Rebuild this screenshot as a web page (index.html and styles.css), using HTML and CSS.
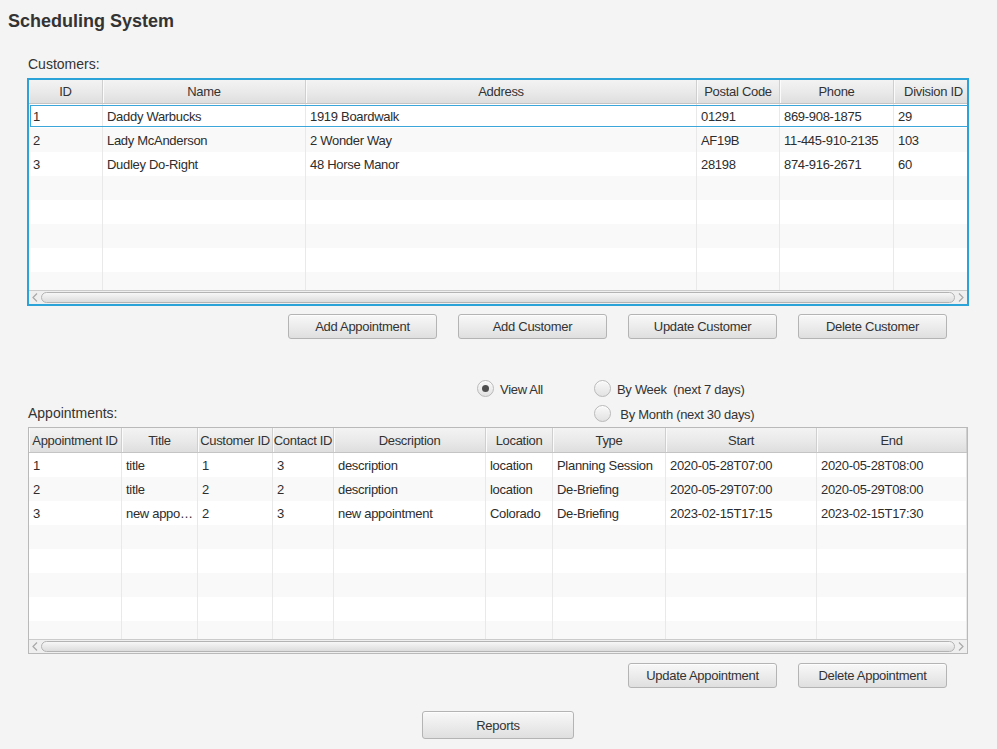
FILE: index.html
```html
<!DOCTYPE html>
<html>
<head>
<meta charset="utf-8">
<title>Scheduling System</title>
<link rel="stylesheet" href="styles.css">
</head>
<body>
<h1 class="title">Scheduling System</h1>
<div class="panel">
  <div class="section-label cust-label">Customers:</div>
  <div class="table cust-table focused">
    <div class="thead cust-cols">
      <div class="th">ID</div><div class="th">Name</div><div class="th">Address</div><div class="th">Postal Code</div><div class="th">Phone</div><div class="th">Division ID</div>
    </div>
    <div class="tbody">
      <div class="tr cust-cols focus-row"><div class="td">1</div><div class="td">Daddy Warbucks</div><div class="td">1919 Boardwalk</div><div class="td">01291</div><div class="td">869-908-1875</div><div class="td">29</div></div>
      <div class="tr cust-cols"><div class="td">2</div><div class="td">Lady McAnderson</div><div class="td">2 Wonder Way</div><div class="td">AF19B</div><div class="td">11-445-910-2135</div><div class="td">103</div></div>
      <div class="tr cust-cols"><div class="td">3</div><div class="td">Dudley Do-Right</div><div class="td">48 Horse Manor</div><div class="td">28198</div><div class="td">874-916-2671</div><div class="td">60</div></div>
      <div class="tr cust-cols"><div class="td"></div><div class="td"></div><div class="td"></div><div class="td"></div><div class="td"></div><div class="td"></div></div>
      <div class="tr cust-cols"><div class="td"></div><div class="td"></div><div class="td"></div><div class="td"></div><div class="td"></div><div class="td"></div></div>
      <div class="tr cust-cols"><div class="td"></div><div class="td"></div><div class="td"></div><div class="td"></div><div class="td"></div><div class="td"></div></div>
      <div class="tr cust-cols"><div class="td"></div><div class="td"></div><div class="td"></div><div class="td"></div><div class="td"></div><div class="td"></div></div>
      <div class="tr cust-cols"><div class="td"></div><div class="td"></div><div class="td"></div><div class="td"></div><div class="td"></div><div class="td"></div></div>
    </div>
    <div class="hscroll">
      <span class="arrow"><svg width="6" height="9" viewBox="0 0 6 9"><polyline points="5,0.5 1,4.5 5,8.5" fill="none" stroke="#a8a8a8" stroke-width="1.2"/></svg></span>
      <span class="thumb"></span>
      <span class="arrow"><svg width="6" height="9" viewBox="0 0 6 9"><polyline points="1,0.5 5,4.5 1,8.5" fill="none" stroke="#a8a8a8" stroke-width="1.2"/></svg></span>
    </div>
  </div>

  <div class="btn-row first-btns">
    <button class="btn">Add Appointment</button>
    <button class="btn">Add Customer</button>
    <button class="btn">Update Customer</button>
    <button class="btn">Delete Customer</button>
  </div>

  <div class="filters">
    <div class="section-label appt-label">Appointments:</div>
    <label class="radio view-all"><span class="circle checked"></span><span class="rtext">View All</span></label>
    <div class="radio-col">
      <label class="radio"><span class="circle"></span><span class="rtext">By Week&nbsp; (next 7 days)</span></label>
      <label class="radio"><span class="circle"></span><span class="rtext">&nbsp;By Month (next 30 days)</span></label>
    </div>
  </div>

  <div class="table appt-table">
    <div class="thead appt-cols">
      <div class="th">Appointment ID</div><div class="th">Title</div><div class="th">Customer ID</div><div class="th">Contact ID</div><div class="th">Description</div><div class="th">Location</div><div class="th">Type</div><div class="th">Start</div><div class="th">End</div>
    </div>
    <div class="tbody">
      <div class="tr appt-cols"><div class="td">1</div><div class="td">title</div><div class="td">1</div><div class="td">3</div><div class="td">description</div><div class="td">location</div><div class="td">Planning Session</div><div class="td">2020-05-28T07:00</div><div class="td">2020-05-28T08:00</div></div>
      <div class="tr appt-cols"><div class="td">2</div><div class="td">title</div><div class="td">2</div><div class="td">2</div><div class="td">description</div><div class="td">location</div><div class="td">De-Briefing</div><div class="td">2020-05-29T07:00</div><div class="td">2020-05-29T08:00</div></div>
      <div class="tr appt-cols"><div class="td">3</div><div class="td">new appoi…</div><div class="td">2</div><div class="td">3</div><div class="td">new appointment</div><div class="td">Colorado</div><div class="td">De-Briefing</div><div class="td">2023-02-15T17:15</div><div class="td">2023-02-15T17:30</div></div>
      <div class="tr appt-cols"><div class="td"></div><div class="td"></div><div class="td"></div><div class="td"></div><div class="td"></div><div class="td"></div><div class="td"></div><div class="td"></div><div class="td"></div></div>
      <div class="tr appt-cols"><div class="td"></div><div class="td"></div><div class="td"></div><div class="td"></div><div class="td"></div><div class="td"></div><div class="td"></div><div class="td"></div><div class="td"></div></div>
      <div class="tr appt-cols"><div class="td"></div><div class="td"></div><div class="td"></div><div class="td"></div><div class="td"></div><div class="td"></div><div class="td"></div><div class="td"></div><div class="td"></div></div>
      <div class="tr appt-cols"><div class="td"></div><div class="td"></div><div class="td"></div><div class="td"></div><div class="td"></div><div class="td"></div><div class="td"></div><div class="td"></div><div class="td"></div></div>
      <div class="tr appt-cols"><div class="td"></div><div class="td"></div><div class="td"></div><div class="td"></div><div class="td"></div><div class="td"></div><div class="td"></div><div class="td"></div><div class="td"></div></div>
    </div>
    <div class="hscroll">
      <span class="arrow"><svg width="6" height="9" viewBox="0 0 6 9"><polyline points="5,0.5 1,4.5 5,8.5" fill="none" stroke="#a8a8a8" stroke-width="1.2"/></svg></span>
      <span class="thumb"></span>
      <span class="arrow"><svg width="6" height="9" viewBox="0 0 6 9"><polyline points="1,0.5 5,4.5 1,8.5" fill="none" stroke="#a8a8a8" stroke-width="1.2"/></svg></span>
    </div>
  </div>

  <div class="btn-row second-btns">
    <button class="btn">Update Appointment</button>
    <button class="btn">Delete Appointment</button>
  </div>

  <div class="reports-row">
    <button class="btn reports">Reports</button>
  </div>
</div>
</body>
</html>
```

FILE: styles.css
```css
* { box-sizing: border-box; }

html, body {
  margin: 0;
  padding: 0;
  background: #f4f4f4;
  font-family: "Liberation Sans", Arial, sans-serif;
  color: #333;
}

body { width: 997px; height: 749px; overflow: hidden; }

.title {
  margin: 0;
  padding: 10px 0 0 8px;
  font-size: 18px;
  line-height: 22px;
  font-weight: bold;
  color: #333;
}

.panel {
  margin-left: 28px;
  width: 940px;
}

.section-label {
  font-size: 14px;
  line-height: 16px;
  color: #333;
}

.cust-label { margin-top: 24px; }

/* ---------- tables ---------- */
.table {
  background: #fff;
  overflow: hidden;
  display: flex;
  flex-direction: column;
}

.cust-table {
  margin-top: 6px;
  margin-left: -1px;
  width: 942px;
  height: 228px;
  border: 2px solid #2ba2d8;
}

.appt-table {
  width: 940px;
  height: 227px;
  border: 1px solid #b9b9b9;
}

.cust-cols {
  display: grid;
  grid-template-columns: 74px 203px 391px 83px 114px 80px;
  width: 945px;
}

.appt-cols {
  display: grid;
  grid-template-columns: 93px 76px 75px 61px 152px 67px 113px 151px 150px;
  width: 938px;
}

.thead {
  height: 24px;
  background: linear-gradient(to bottom, #f3f3f3 0%, #e9e9e9 55%, #dedede 100%);
  border-bottom: 1px solid #c4c4c4;
  flex: none;
}

.appt-table .thead { height: 25px; }

.th {
  font-size: 13px;
  letter-spacing: -0.3px;
  line-height: 24px;
  text-align: center;
  white-space: nowrap;
  overflow: hidden;
  border-right: 1px solid #cfcfcf;
  box-shadow: inset 1px 0 0 #fbfbfb;
  color: #333;
}

.appt-table .th { line-height: 26px; }

.tbody {
  height: 186px;
  overflow: hidden;
  flex: none;
}

.tr {
  height: 24px;
  background: #fff;
}

.tr:nth-child(even) { background: #f9f9f9; }

.focus-row {
  outline: 1px solid #3aa6da;
  outline-offset: -2px;
}

.td {
  font-size: 13px;
  letter-spacing: -0.3px;
  line-height: 25px;
  height: 24px;
  padding: 0 4px;
  white-space: nowrap;
  overflow: hidden;
  text-overflow: ellipsis;
  border-right: 1px solid #e9e9e9;
  color: #2d2d2d;
}

.hscroll {
  height: 14px;
  flex: none;
  display: flex;
  align-items: center;
  background: #efefef;
  border-top: 1px solid #cbcbcb;
}

.arrow {
  width: 12px;
  flex: none;
  display: flex;
  justify-content: center;
  align-items: center;
}

.thumb {
  flex: 1;
  height: 11px;
  border: 1px solid #b3b3b3;
  border-radius: 6px;
  background: linear-gradient(to bottom, #f7f7f7, #dcdcdc);
}

/* ---------- buttons ---------- */
.btn-row {
  display: flex;
  justify-content: flex-end;
  gap: 21px;
  padding-right: 21px;
}

.first-btns { margin-top: 8px; }
.second-btns { margin-top: 9px; }

.btn {
  width: 149px;
  height: 25px;
  margin: 0;
  padding: 0;
  font-family: "Liberation Sans", Arial, sans-serif;
  font-size: 13px;
  letter-spacing: -0.3px;
  color: #333;
  background: linear-gradient(to bottom, #f8f8f8 0%, #ececec 50%, #dfdfdf 100%);
  border: 1px solid #b4b4b4;
  border-radius: 3px;
  box-shadow: inset 0 1px 0 #fdfdfd;
}

.reports-row {
  margin-top: 23px;
  display: flex;
  justify-content: center;
}

.reports {
  width: 152px;
  height: 28px;
}

/* ---------- filters ---------- */
.filters {
  height: 88px;
  display: grid;
  grid-template-columns: 449px 117px auto;
}

.appt-label {
  align-self: end;
  margin-bottom: 6px;
}

.radio {
  display: flex;
  align-items: center;
  gap: 6px;
  height: 17px;
  font-size: 13px;
  letter-spacing: -0.3px;
  color: #333;
}

.rtext { padding-top: 1px; }

.view-all { margin-top: 41px; }

.radio-col {
  margin-top: 41px;
  display: flex;
  flex-direction: column;
  gap: 8px;
}

.circle {
  width: 17px;
  height: 17px;
  flex: none;
  border-radius: 50%;
  border: 1px solid #b9b9b9;
  background: linear-gradient(to bottom, #f9f9f9, #e2e2e2);
  box-shadow: inset 0 1px 0 #ffffff;
  display: flex;
  align-items: center;
  justify-content: center;
}

.circle.checked::after {
  content: "";
  width: 7px;
  height: 7px;
  border-radius: 50%;
  background: #4f4f4f;
}
```
